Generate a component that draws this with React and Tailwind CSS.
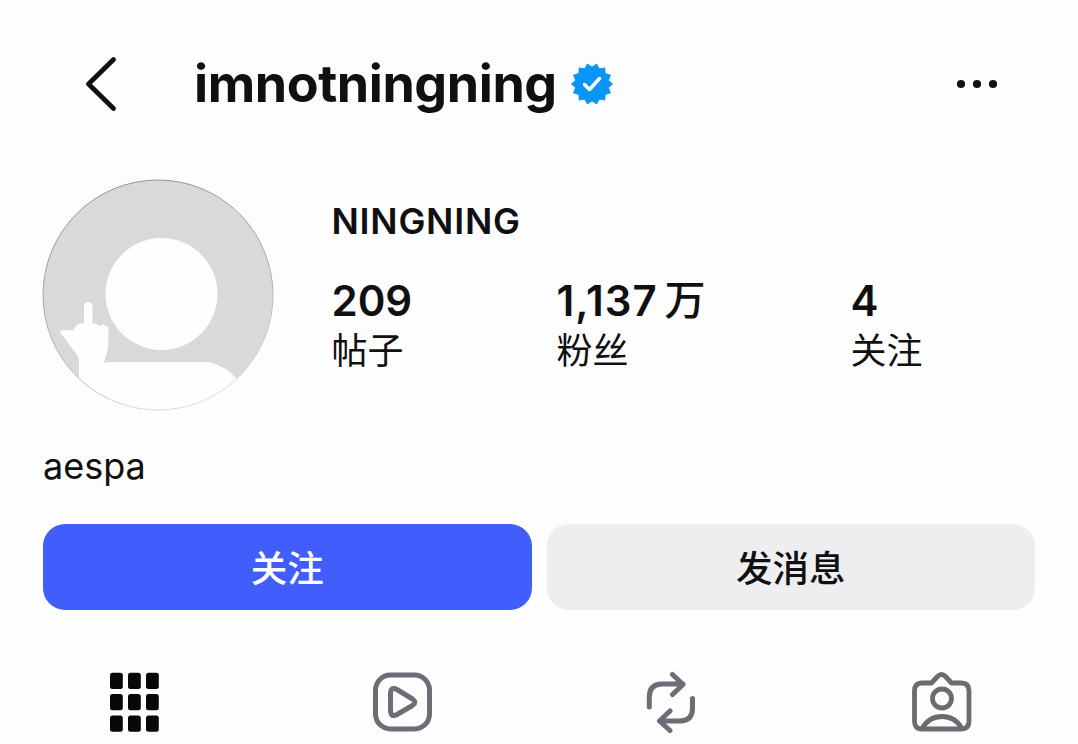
import React from "react";

const points = 14;
const badge = Array.from({ length: points * 2 }, (_, i) => {
  const a = ((i + 1) * Math.PI) / points;
  const r = i % 2 === 0 ? 20.6 : 16.9;
  return `${(21 + r * Math.sin(a)).toFixed(2)},${(21 - r * Math.cos(a)).toFixed(2)}`;
}).join(" ");

function Header() {
  return (
    <header className="flex h-[168px] items-center pl-[84px] pr-[80px]">
      <svg className="h-[58px] w-[34px] shrink-0" viewBox="0 0 34 58" fill="none" stroke="#101012" strokeWidth="4.8" strokeLinecap="round" strokeLinejoin="round">
        <path d="M29.5 4.5 4.5 29l25 24.5" />
      </svg>
      <h1 className="ml-[76px] w-[362px] text-[52px] leading-[64px] font-bold whitespace-nowrap tracking-[-0.42px]">imnotningning</h1>
      <svg className="ml-[15px] h-[42px] w-[42px] shrink-0" viewBox="0 0 42 42">
        <polygon points={badge} fill="#0795f6" stroke="#0795f6" strokeWidth="0.8" strokeLinejoin="round" />
        <path d="m13.5 21.5 5 5 10-11" fill="none" stroke="#fff" strokeWidth="3.5" strokeLinecap="round" strokeLinejoin="round" />
      </svg>
      <svg className="ml-auto h-[10px] w-[42px]" viewBox="0 0 42 10" fill="#101012">
        <circle cx="5" cy="5" r="4.1" />
        <circle cx="21" cy="5" r="4.1" />
        <circle cx="37" cy="5" r="4.1" />
      </svg>
    </header>
  );
}

function Avatar() {
  return (
    <svg className="h-[232px] w-[232px] shrink-0" viewBox="0 0 232 232">
      <defs>
        <clipPath id="avatar"><circle cx="116" cy="116" r="115" /></clipPath>
        <linearGradient id="ring" x1="0.2" y1="0" x2="0.5" y2="1">
          <stop offset="0" stopColor="#8f8f8f" />
          <stop offset="0.6" stopColor="#b0b0b0" />
          <stop offset="1" stopColor="#dcdcdc" />
        </linearGradient>
      </defs>
      <g clipPath="url(#avatar)">
        <rect width="232" height="232" fill="#d9d9d9" />
        <circle cx="119.5" cy="115" r="56" fill="#fefefe" />
        <path fill="#fefefe" d="M37 240V180C34 173 29 169 25 162L19 155Q17 151 21 151L31 151.500Q33 147 35 146Q38 143 42 145V127.500Q42 123 46 123T50.500 127.500V145Q54 143 57 147Q61 144 64 147Q67 147 66.500 151L66 169L62 184Q66 183 71 183H167Q183 186 198 203V240Z" />
      </g>
      <circle cx="116" cy="116" r="115" fill="none" stroke="url(#ring)" strokeWidth="1" />
    </svg>
  );
}

function Stat({ value, unit, label, className }) {
  return (
    <div className={className}>
      <div className="flex h-[51px] items-center text-[42px] font-semibold">
        <span className={unit ? "tracking-[1px]" : ""}>{value}</span>
        {unit && <span className="ml-[7px] text-[41px] font-medium">{unit}</span>}
      </div>
      <div className="h-[50px] text-[36px] leading-[50px] font-normal">{label}</div>
    </div>
  );
}

function Tabs() {
  const cells = [0, 1, 2];
  return (
    <nav className="mt-[60px] flex h-[64px] items-center pl-[109px] pr-[105px]">
      <svg className="h-[60px] w-[50px]" viewBox="0 0 50 60" fill="#08080a">
        {cells.map((r) => cells.map((c) => (
          <rect key={`${r}${c}`} x={1 + c * 18} y={0.7 + r * 21.4} width="12.800" height="16.200" rx="2.500" />
        )))}
      </svg>
      <svg className="ml-[213px] h-[60px] w-[60px]" viewBox="0 0 60 60" fill="none" stroke="#6b6e75" strokeWidth="5" strokeLinejoin="round">
        <rect x="3.500" y="3" width="54" height="54" rx="15" />
        <path d="M18.500 22V38Q18.500 46 25 42.500L40.500 33.500Q45 30.500 40.500 27L25 17.500Q18.500 14 18.500 22Z" />
      </svg>
      <svg className="ml-[214px] h-[62px] w-[52px]" viewBox="0 0 52 62" fill="none" stroke="#6b6e75" strokeWidth="5" strokeLinecap="round" strokeLinejoin="round">
        <path d="M3.300 36V26Q3.300 13 16 13H37M26.500 3.500 37 13.500 26.500 23.500M46.500 27.500V37Q46.500 50 34 50H14M24 40 13.500 50 24 59.500" />
      </svg>
      <svg className="ml-auto h-[62px] w-[62px]" viewBox="0 0 62 62" fill="none" stroke="#6b6b70" strokeWidth="4.800" strokeLinejoin="round">
        <path d="M11 12H20.500L26.500 5.500Q30.500 1.500 34.500 5.500L40.500 12H50Q58 12 58 20V50Q58 58 50 58H11Q3.500 58 3.500 50V20Q3.500 12 11 12Z" />
        <circle cx="31" cy="27.500" r="9.500" />
        <path d="M11.500 57Q18 45.500 31 45.500T50.500 57" />
      </svg>
    </nav>
  );
}

export default function App() {
  return (
    <main className="h-[744px] w-[1078px] overflow-hidden bg-[#fdfdfd] text-[#101012] [font-family:Inter,'Noto_Sans_CJK_SC',sans-serif]">
      <Header />
      <section className="flex h-[243px] pl-[42px] pt-[11px]">
        <Avatar />
        <div className="ml-[57.500px] pt-[19px]">
          <h2 className="text-[36px] leading-[46px] font-semibold tracking-[0.75px]">NINGNING</h2>
          <div className="mt-[31px] flex">
            <Stat className="w-[225px]" value="209" label="帖子" />
            <Stat className="w-[294px]" value="1,137" unit="万" label="粉丝" />
            <Stat value="4" label="关注" />
          </div>
        </div>
      </section>
      <p className="mt-[33px] pl-[43px] text-[36px] leading-[44px]">aespa</p>
      <div className="mt-[36px] flex gap-[15px] px-[43px]">
        <button className="h-[86px] w-[489px] rounded-[22px] bg-[#415dfc] pt-[4px] text-[36.500px] font-medium text-white">关注</button>
        <button className="h-[86px] w-[489px] rounded-[22px] bg-[#eeeef1] pt-[4px] text-[36.500px] font-medium">发消息</button>
      </div>
      <Tabs />
    </main>
  );
}
